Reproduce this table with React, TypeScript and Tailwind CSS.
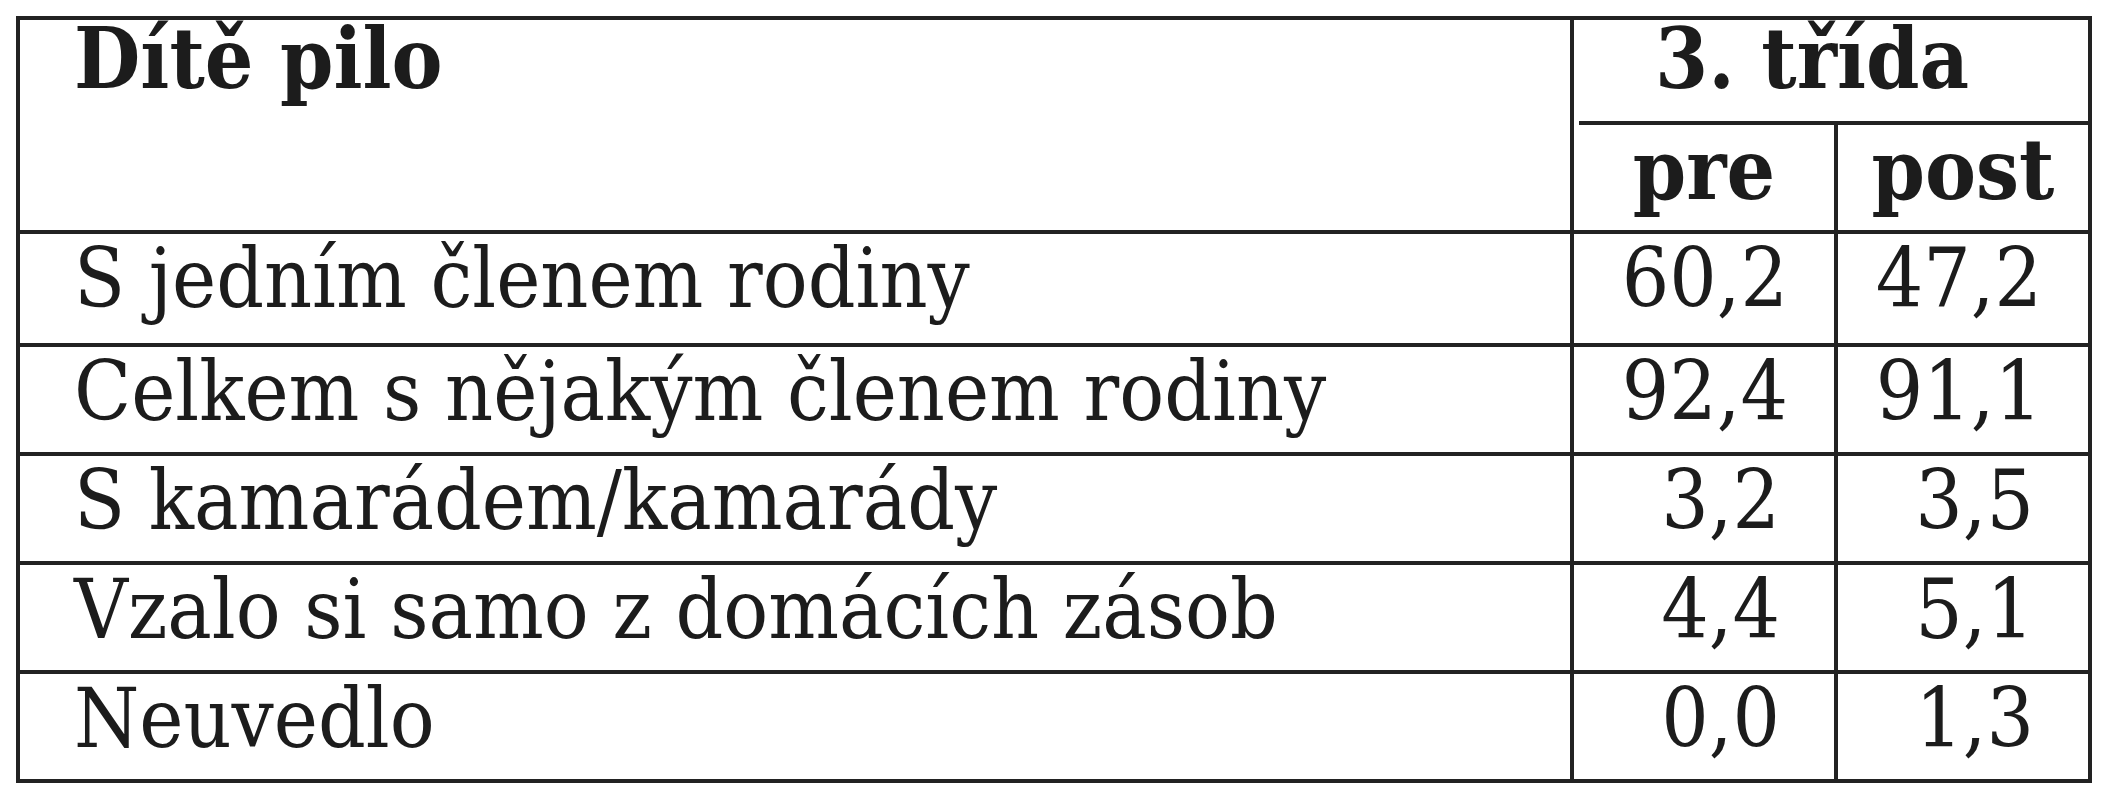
const rows = [
  { label: "S jedním členem rodiny", pre: "60,2", post: "47,2", h: "h-[113px]", pad: "pr-[46px]" },
  { label: "Celkem s nějakým členem rodiny", pre: "92,4", post: "91,1", h: "h-[109px]", pad: "pr-[46px]" },
  { label: "S kamarádem/kamarády", pre: "3,2", post: "3,5", h: "h-[109px]", pad: "pr-[54px]" },
  { label: "Vzalo si samo z domácích zásob", pre: "4,4", post: "5,1", h: "h-[109px]", pad: "pr-[54px]" },
  { label: "Neuvedlo", pre: "0,0", post: "1,3", h: "h-[109px]", pad: "pr-[54px]" },
];

export default function App() {
  return (
    <div className="min-h-[800px] w-[2109px] bg-white pt-[16px] pl-[16px] font-['DejaVu_Serif_Condensed','DejaVu_Serif',serif] text-[#1c1c1c]">
      <table className="w-[2072px] table-fixed border-collapse">
        <colgroup>
          <col className="w-[1554px]" />
          <col className="w-[264px]" />
          <col className="w-[254px]" />
        </colgroup>
        <thead>
          <tr className="h-[107px]">
            <th
              rowSpan={2}
              className="border-[4px] border-[#222] pl-[54px] pt-0 text-left align-top text-[85px] font-bold leading-[77px]"
            >
              Dítě pilo
            </th>
            <th colSpan={2} className="border-[4px] border-b-0 border-[#222] p-0 align-bottom">
              <div className="h-[101px] pt-0 pr-[38px] text-center text-[85px] font-bold leading-[77px]">
                3. třída
              </div>
              <div className="ml-[5px] h-[4px] bg-[#222]" />
            </th>
          </tr>
          <tr className="h-[107px]">
            <th className="border-[4px] border-t-0 border-[#222] pt-[2px] text-center align-top text-[85px] font-bold leading-none">
              pre
            </th>
            <th className="border-[4px] border-t-0 border-[#222] pt-[2px] text-center align-top text-[85px] font-bold leading-none">
              post
            </th>
          </tr>
        </thead>
        <tbody>
          {rows.map((r) => (
            <tr key={r.label} className={r.h}>
              <td className="border-[4px] border-[#222] pl-[54px] pt-[3px] align-top text-[83px] leading-none whitespace-nowrap">
                {r.label}
              </td>
              <td className={`border-[4px] border-[#222] pt-[3px] text-right align-top text-[83px] leading-none ${r.pad}`}>
                {r.pre}
              </td>
              <td className={`border-[4px] border-[#222] pt-[3px] text-right align-top text-[83px] leading-none ${r.pad}`}>
                {r.post}
              </td>
            </tr>
          ))}
        </tbody>
      </table>
    </div>
  );
}
